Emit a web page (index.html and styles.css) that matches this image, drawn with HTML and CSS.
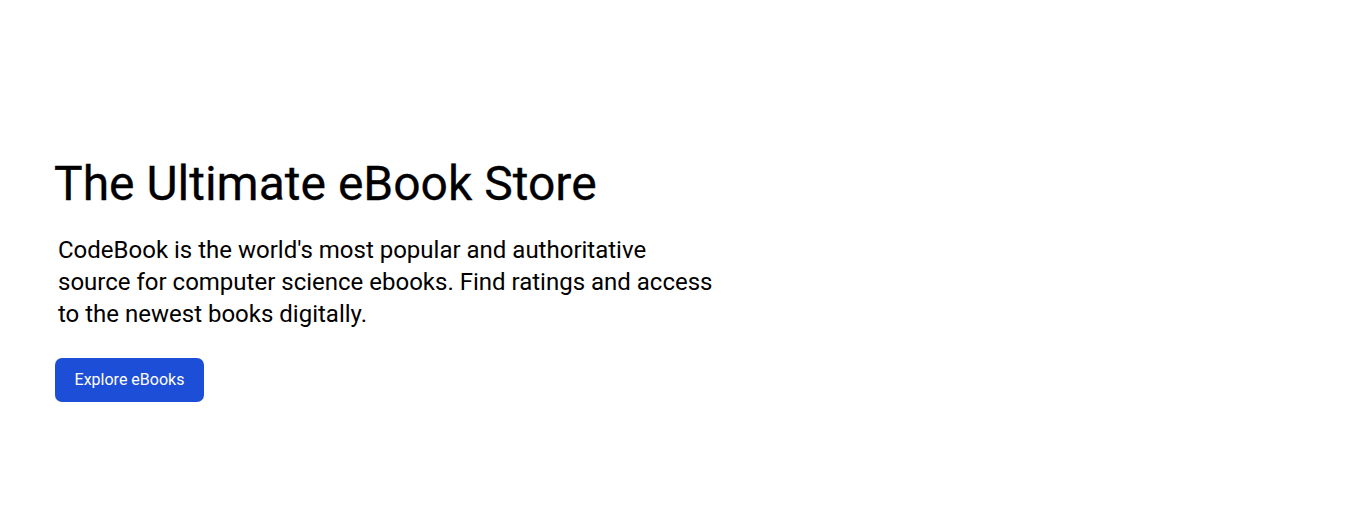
FILE: index.html
```html
<!DOCTYPE html>
<html lang="en">
<head>
<meta charset="utf-8">
<title>CodeBook</title>
<link rel="stylesheet" href="styles.css">
</head>
<body>
<main class="hero">
  <h1 class="hero-title">The Ultimate eBook Store</h1>
  <p class="hero-text">CodeBook is the world's most popular and authoritative source for computer science ebooks. Find ratings and access to the newest books digitally.</p>
  <a class="hero-button" href="#">Explore eBooks</a>
</main>
</body>
</html>
```
FILE: styles.css
```css
* { box-sizing: border-box; }
html, body {
  margin: 0;
  padding: 0;
  background: #ffffff;
  font-family: Roboto, "Liberation Sans", sans-serif;
  color: #000000;
}
.hero {
  display: flex;
  flex-direction: column;
  align-items: flex-start;
  padding: 156px 0 0 54px;
}
.hero-title {
  margin: 0;
  font-size: 48px;
  font-weight: 400;
  line-height: 56px;
  -webkit-text-stroke: 0.3px #000000;
}
.hero-text {
  margin: 22px 0 0 4px;
  width: 656px;
  font-size: 24px;
  line-height: 32px;
  font-weight: 400;
}
.hero-button {
  margin-top: 28px;
  margin-left: 1px;
  display: inline-flex;
  align-items: center;
  justify-content: center;
  height: 44px;
  width: 149px;
  padding-bottom: 2px;
  border-radius: 7px;
  background: #1d4ed8;
  color: #ffffff;
  font-size: 16px;
  text-decoration: none;
}
```
